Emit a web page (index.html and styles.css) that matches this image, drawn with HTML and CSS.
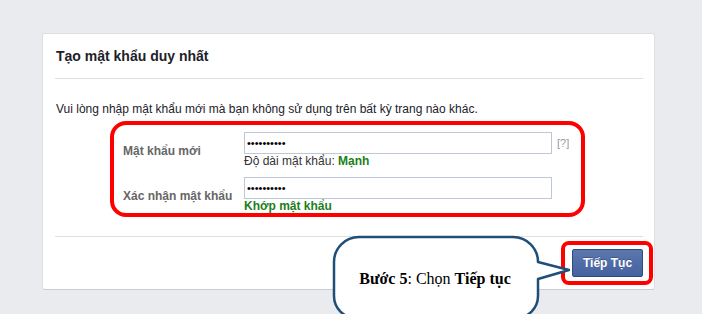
FILE: index.html
```html
<!DOCTYPE html>
<html lang="vi">
<head>
<meta charset="utf-8">
<title>Tạo mật khẩu duy nhất</title>
<link rel="stylesheet" href="styles.css">
</head>
<body>
<div class="card">
  <div class="card-head"><h2 class="title">Tạo mật khẩu duy nhất</h2></div>
  <div class="card-body">
    <p class="intro">Vui lòng nhập mật khẩu mới mà bạn không sử dụng trên bất kỳ trang nào khác.</p>
    <div class="form-box">
      <div class="form-grid">
        <label class="field-label" for="pw1">Mật khẩu mới</label>
        <div class="field">
          <div class="input-row">
            <input class="pw" id="pw1" type="password" value="abcdefghij">
            <span class="help">[?]</span>
          </div>
          <div class="hint">Độ dài mật khẩu: <span class="ok">Mạnh</span></div>
        </div>
        <label class="field-label" for="pw2">Xác nhận mật khẩu</label>
        <div class="field">
          <div class="input-row">
            <input class="pw" id="pw2" type="password" value="abcdefghij">
          </div>
          <div class="hint ok">Khớp mật khẩu</div>
        </div>
      </div>
    </div>
  </div>
  <div class="card-foot">
    <span class="btn-wrap">
      <button class="btn" type="button">Tiếp Tục</button>
      <span class="ring"></span>
    </span>
  </div>
</div>
<svg class="callout" width="702" height="314" viewBox="0 0 702 314">
  <path class="bubble" d="M 359 237 H 513 A 25 25 0 0 1 538 262 L 569 270 L 538 279 V 296 A 22 22 0 0 1 516 318 H 356 A 22 22 0 0 1 334 296 V 262 A 25 25 0 0 1 359 237 Z"/>
  <text class="bubble-text" x="435" y="284" text-anchor="middle"><tspan class="b">Bước 5</tspan>: Chọn <tspan class="b">Tiếp tục</tspan></text>
</svg>
</body>
</html>
```
FILE: styles.css
```css
html, body {
  margin: 0;
  padding: 0;
}
body {
  background: #e9ebee;
  width: 702px;
  height: 314px;
  overflow: hidden;
  position: relative;
  font-family: "Liberation Sans", Arial, sans-serif;
  font-size: 12px;
  color: #1d2129;
}
.card {
  box-sizing: border-box;
  width: 613px;
  margin: 33px 0 0 42px;
  background: #fff;
  border: 1px solid #dddfe2;
  border-bottom-color: #c9ccd1;
  border-radius: 3px;
  padding: 0 11px 0 12px;
}
.card-head {
  padding: 13px 0;
  border-bottom: 1px solid #dddfe2;
}
.title {
  margin: 0 0 0 1px;
  font-size: 14px;
  line-height: 18px;
  font-weight: bold;
  color: #1d2129;
}
.intro {
  margin: 22px 0 4px 1px;
  line-height: 16px;
  color: #1d2129;
}
.form-box {
  box-sizing: border-box;
  width: 475px;
  height: 96px;
  margin-left: 55px;
  border: 4px solid #ff0000;
  border-radius: 16px;
  padding: 7px 0 0 9px;
}
.form-grid {
  display: grid;
  grid-template-columns: 121px 1fr;
  row-gap: 8px;
}
.field-label {
  align-self: center;
  font-weight: bold;
  color: #666;
  padding-top: 1px;
}
.input-row {
  display: flex;
  align-items: center;
}
.pw {
  box-sizing: border-box;
  width: 308px;
  height: 22px;
  margin: 0;
  padding: 0 2px;
  border: 1px solid #bdc7d8;
  font-family: "Liberation Sans", Arial, sans-serif;
  font-size: 11px;
  color: #000;
  outline: none;
}
.help {
  margin-left: 5px;
  font-size: 11px;
  color: #999;
}
.hint {
  line-height: 15px;
  color: #333;
}
.ok {
  color: #1a7f1a;
  font-weight: bold;
}
.card-foot {
  margin-top: 19px;
  border-top: 1px solid #dddfe2;
  padding: 12px 0;
  display: flex;
  justify-content: flex-end;
}
.btn-wrap {
  position: relative;
  display: inline-flex;
}
.btn {
  box-sizing: border-box;
  width: 71px;
  height: 28px;
  margin: 0;
  padding: 0;
  border: 1px solid #2c4a85;
  border-radius: 2px;
  background: linear-gradient(#5b77ae, #4562a0);
  color: #fff;
  font-family: "Liberation Sans", Arial, sans-serif;
  font-size: 12px;
  font-weight: bold;
  text-shadow: 0 -1px 0 rgba(0, 0, 0, 0.25);
}
.ring {
  position: absolute;
  top: -8px;
  bottom: -8px;
  left: -11px;
  right: -10px;
  border: 4px solid #ff0000;
  border-radius: 8px;
}
.callout {
  position: absolute;
  left: 0;
  top: 0;
  pointer-events: none;
}
.bubble {
  fill: #fff;
  stroke: #1f4e79;
  stroke-width: 2.5;
  stroke-linejoin: round;
}
.bubble-text {
  font-family: "Liberation Serif", "Times New Roman", serif;
  font-size: 16px;
  fill: #000;
}
.bubble-text .b {
  font-weight: bold;
}
```
